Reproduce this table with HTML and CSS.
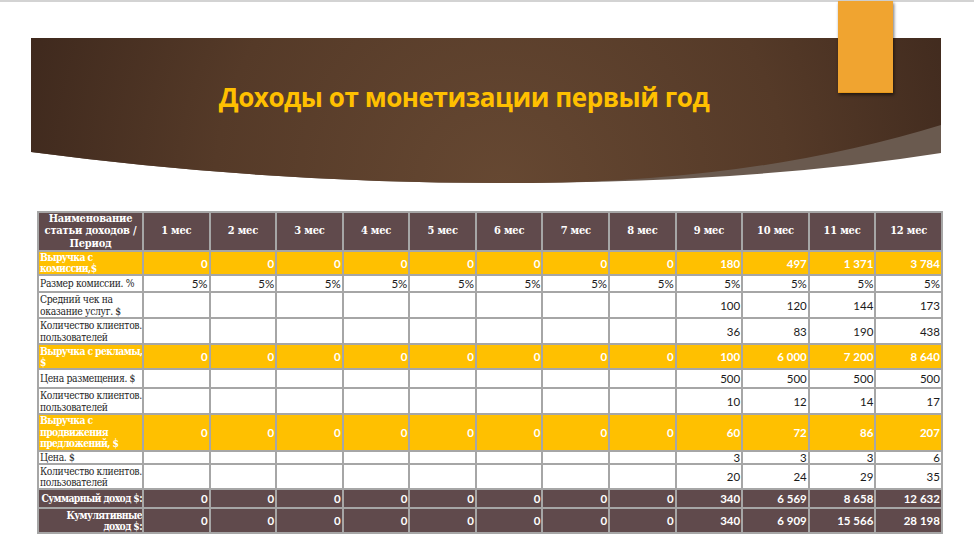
FILE: index.html
```html
<!DOCTYPE html>
<html lang="ru">
<head>
<meta charset="utf-8">
<title>Доходы от монетизации</title>
<link rel="stylesheet" href="styles.css">
</head>
<body>
<div class="slide">
  <div class="top-line"></div>
  <div class="tab"></div>
  <div class="banner">
    <svg class="banner-bg" width="910" height="145" viewBox="0 0 910 145" aria-hidden="true">
      <defs>
        <radialGradient id="bg" gradientUnits="userSpaceOnUse" cx="470" cy="150" r="520">
          <stop offset="0" stop-color="#664832"/>
          <stop offset="0.55" stop-color="#553a28"/>
          <stop offset="1" stop-color="#3c271c"/>
        </radialGradient>
      </defs>
      <path d="M0,0 H910 V115 Q720,145 469,145 Q235,145 0,114 Z" fill="#6a5a4f"/>
      <path d="M0,0 H910 V87 Q715,147 469,145 Q235,145 0,114 Z" fill="url(#bg)"/>
    </svg>
    <h1 class="title">Доходы от монетизации первый год</h1>
  </div>
  <table class="grid">
    <colgroup>
      <col class="c-label">
      <col span="12" class="c-month">
    </colgroup>
    <tr class="r-head">
      <th class="lbl-head">Наименование<br>статьи доходов /<br>Период</th>
      <th>1 мес</th><th>2 мес</th><th>3 мес</th><th>4 мес</th><th>5 мес</th><th>6 мес</th>
      <th>7 мес</th><th>8 мес</th><th>9 мес</th><th>10 мес</th><th>11 мес</th><th>12 мес</th>
    </tr>
    <tr class="r-gold h24">
      <td class="lbl">Выручка с<br>комиссии,$</td>
      <td>0</td><td>0</td><td>0</td><td>0</td><td>0</td><td>0</td><td>0</td><td>0</td>
      <td>180</td><td>497</td><td>1&#8239;371</td><td>3&#8239;784</td>
    </tr>
    <tr class="r-plain h17">
      <td class="lbl">Размер комиссии. %</td>
      <td>5%</td><td>5%</td><td>5%</td><td>5%</td><td>5%</td><td>5%</td><td>5%</td><td>5%</td>
      <td>5%</td><td>5%</td><td>5%</td><td>5%</td>
    </tr>
    <tr class="r-plain h26">
      <td class="lbl">Средний чек на<br>оказание услуг. $</td>
      <td></td><td></td><td></td><td></td><td></td><td></td><td></td><td></td>
      <td>100</td><td>120</td><td>144</td><td>173</td>
    </tr>
    <tr class="r-plain h26">
      <td class="lbl">Количество клиентов.<br>пользователей</td>
      <td></td><td></td><td></td><td></td><td></td><td></td><td></td><td></td>
      <td>36</td><td>83</td><td>190</td><td>438</td>
    </tr>
    <tr class="r-gold h25">
      <td class="lbl">Выручка с рекламы,<br>$</td>
      <td>0</td><td>0</td><td>0</td><td>0</td><td>0</td><td>0</td><td>0</td><td>0</td>
      <td>100</td><td>6&#8239;000</td><td>7&#8239;200</td><td>8&#8239;640</td>
    </tr>
    <tr class="r-plain h19">
      <td class="lbl">Цена размещения. $</td>
      <td></td><td></td><td></td><td></td><td></td><td></td><td></td><td></td>
      <td>500</td><td>500</td><td>500</td><td>500</td>
    </tr>
    <tr class="r-plain h26">
      <td class="lbl">Количество клиентов.<br>пользователей</td>
      <td></td><td></td><td></td><td></td><td></td><td></td><td></td><td></td>
      <td>10</td><td>12</td><td>14</td><td>17</td>
    </tr>
    <tr class="r-gold h37">
      <td class="lbl">Выручка с<br>продвижения<br>предложений, $</td>
      <td>0</td><td>0</td><td>0</td><td>0</td><td>0</td><td>0</td><td>0</td><td>0</td>
      <td>60</td><td>72</td><td>86</td><td>207</td>
    </tr>
    <tr class="r-plain h12">
      <td class="lbl">Цена. $</td>
      <td></td><td></td><td></td><td></td><td></td><td></td><td></td><td></td>
      <td>3</td><td>3</td><td>3</td><td>6</td>
    </tr>
    <tr class="r-plain h25">
      <td class="lbl">Количество клиентов.<br>пользователей</td>
      <td></td><td></td><td></td><td></td><td></td><td></td><td></td><td></td>
      <td>20</td><td>24</td><td>29</td><td>35</td>
    </tr>
    <tr class="r-total h19">
      <td class="lbl">Суммарный доход $:</td>
      <td>0</td><td>0</td><td>0</td><td>0</td><td>0</td><td>0</td><td>0</td><td>0</td>
      <td>340</td><td>6&#8239;569</td><td>8&#8239;658</td><td>12&#8239;632</td>
    </tr>
    <tr class="r-total h25">
      <td class="lbl">Кумулятивные<br>доход $:</td>
      <td>0</td><td>0</td><td>0</td><td>0</td><td>0</td><td>0</td><td>0</td><td>0</td>
      <td>340</td><td>6&#8239;909</td><td>15&#8239;566</td><td>28&#8239;198</td>
    </tr>
  </table>
</div>
</body>
</html>
```

FILE: styles.css
```css
* { box-sizing: border-box; }

html, body {
  margin: 0;
  padding: 0;
  background: #ffffff;
}

.slide {
  position: relative;
  width: 974px;
  height: 549px;
  overflow: hidden;
  background: #ffffff;
}

.top-line {
  height: 2px;
  background: #d3d3d3;
}

.tab {
  position: absolute;
  left: 838px;
  top: 1px;
  width: 55px;
  height: 92px;
  background: #f0a430;
  border-bottom: 1px solid #e89a1c;
  box-shadow: 1px 2px 3px rgba(0, 0, 0, 0.55);
  z-index: 2;
}

.banner {
  position: relative;
  margin: 36px 0 0 31px;
  width: 910px;
  height: 145px;
}

.banner-bg {
  position: absolute;
  left: 0;
  top: 0;
  display: block;
}

.title {
  position: relative;
  margin: 0;
  padding: 42px 44px 0 0;
  text-align: center;
  font-family: "Open Sans", "Noto Sans", sans-serif;
  font-weight: 700;
  font-size: 26px;
  letter-spacing: -0.45px;
  line-height: 34px;
  color: #ffc000;
}

.grid {
  margin: 28px 0 0 37px;
  width: 904px;
  border-collapse: collapse;
  table-layout: fixed;
}

.c-label { width: 105px; }
.c-month { width: 66.58px; }

.grid th,
.grid td {
  border: 2px solid #a6a6a6;
  padding: 0 1px;
  vertical-align: middle;
  overflow: hidden;
  white-space: nowrap;
}

.r-head th {
  height: 39px;
  background: #604a4c;
  color: #ffffff;
  font-family: "DejaVu Serif", "Liberation Serif", serif;
  font-stretch: condensed;
  font-weight: 700;
  font-size: 11px;
  letter-spacing: -0.2px;
  text-align: center;
  line-height: 12.3px;
}

.r-head .lbl-head { padding: 0; }

.grid td {
  text-align: right;
  font-family: "Lato", "Liberation Sans", sans-serif;
  font-size: 11.5px;
  line-height: 11px;
  color: #1a1a1a;
}

.grid td.lbl {
  text-align: left;
  font-family: "DejaVu Serif", "Liberation Serif", serif;
  font-stretch: condensed;
  font-size: 10.3px;
  letter-spacing: -0.35px;
  line-height: 11px;
  color: #262626;
}

.r-plain.h26 td.lbl { line-height: 12px; }

.r-gold td {
  background: #ffc000;
  color: #ffffff;
  font-weight: 700;
}

.r-gold td.lbl {
  color: #ffffff;
  font-weight: 700;
  letter-spacing: -0.6px;
}

.r-gold.h37 td.lbl { line-height: 11.5px; }

.r-total td {
  background: #604a4c;
  color: #ffffff;
  font-weight: 700;
}

.r-total td.lbl {
  color: #ffffff;
  font-weight: 700;
  text-align: right;
  letter-spacing: -0.6px;
  padding-right: 0;
}

.h12 td { height: 12px; }
.h17 td { height: 17px; }
.h19 td { height: 19px; }
.h24 td { height: 24px; }
.h25 td { height: 25px; }
.h26 td { height: 26px; }
.h37 td { height: 37px; }
```
